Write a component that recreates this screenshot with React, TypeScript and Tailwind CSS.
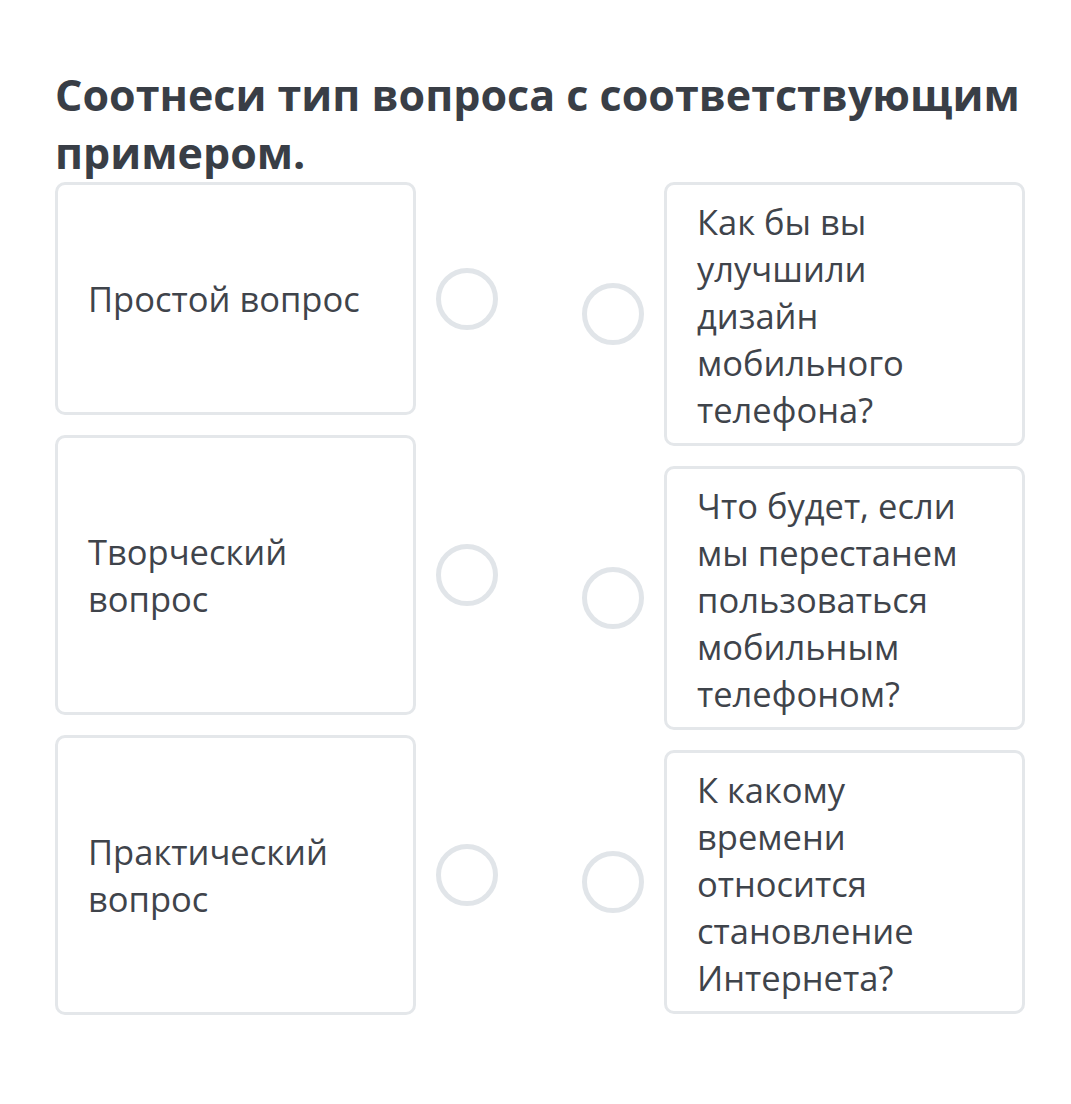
const left = [
  { lines: ["Простой вопрос"], h: "h-[233px]" },
  { lines: ["Творческий", "вопрос"], h: "h-[280px]" },
  { lines: ["Практический", "вопрос"], h: "h-[280px]" },
];

const right = [
  ["Как бы вы", "улучшили", "дизайн", "мобильного", "телефона?"],
  ["Что будет, если", "мы перестанем", "пользоваться", "мобильным", "телефоном?"],
  ["К какому", "времени", "относится", "становление", "Интернета?"],
];

function Dot() {
  return <div className="w-[62px] h-[62px] shrink-0 rounded-full border-[5px] border-[#e1e5e9] bg-white" />;
}

export default function App() {
  return (
    <div className="min-h-[1104px] bg-white pl-[55px] pt-[66px] font-['Open_Sans',sans-serif]">
      <h1 className="w-[1000px] text-[43px] leading-[58px] font-bold text-[#393e46]">
        Соотнеси тип вопроса с соответствующим
        <br />
        примером.
      </h1>
      <div className="flex">
        <div className="flex flex-col gap-5">
          {left.map((item, i) => (
            <div key={i} className="flex items-center gap-5">
              <div className={`w-[361px] ${item.h} flex flex-col justify-center rounded-[10px] border-[3px] border-[#e4e7ea] pl-[30px] text-[34.5px] leading-[47px] text-[#3f444b]`}>
                {item.lines.map((l) => (
                  <span key={l} className="whitespace-nowrap">{l}</span>
                ))}
              </div>
              <Dot />
            </div>
          ))}
        </div>
        <div className="ml-[84px] flex flex-col gap-5">
          {right.map((lines, i) => (
            <div key={i} className="flex items-center gap-5">
              <Dot />
              <div className="w-[361px] h-[264px] flex flex-col rounded-[10px] border-[3px] border-[#e4e7ea] pl-[30px] pt-[13px] text-[34.5px] leading-[47px] text-[#3f444b]">
                {lines.map((l) => (
                  <span key={l} className="whitespace-nowrap">{l}</span>
                ))}
              </div>
            </div>
          ))}
        </div>
      </div>
    </div>
  );
}
